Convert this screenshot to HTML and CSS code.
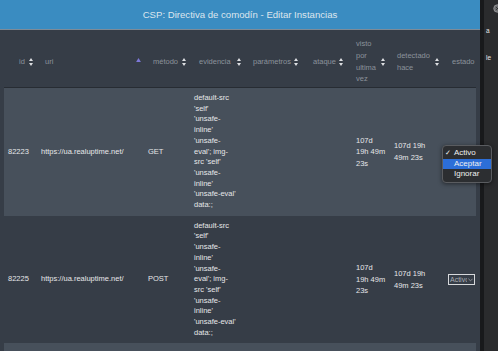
FILE: index.html
```
<!doctype html>
<html lang="es">
<head>
<meta charset="utf-8">
<title>CSP: Directiva de comodín - Editar Instancias</title>
<link rel="stylesheet" href="styles.css">
</head>
<body>
	<div class="page">
		<div class="modal">
			<div class="modal-head">CSP: Directiva de comodín - Editar Instancias</div>
			<div class="table-wrap">
				<table class="grid">
					<colgroup>
						<col class="w-id"><col class="w-uri"><col class="w-met"><col class="w-evi"><col class="w-par">
						<col class="w-ata"><col class="w-vis"><col class="w-det"><col class="w-est">
					</colgroup>
					<thead>
						<tr>
							<th class="h-id"><div class="th"><span>id</span><svg class="sort" viewBox="0 0 4 8"><path d="M2 0L4 3H0Z M2 8L0 5H4Z"/></svg></div></th>
							<th class="h-uri"><div class="th"><span>uri</span><svg class="sort-asc" viewBox="0 0 6 5"><path d="M3 0L6 5H0Z"/></svg></div></th>
							<th><div class="th"><span>método</span><svg class="sort" viewBox="0 0 4 8"><path d="M2 0L4 3H0Z M2 8L0 5H4Z"/></svg></div></th>
							<th class="h-evi"><div class="th"><span>evidencia</span><svg class="sort" viewBox="0 0 4 8"><path d="M2 0L4 3H0Z M2 8L0 5H4Z"/></svg></div></th>
							<th class="h-par"><div class="th"><span>parámetros</span><svg class="sort" viewBox="0 0 4 8"><path d="M2 0L4 3H0Z M2 8L0 5H4Z"/></svg></div></th>
							<th class="h-ata"><div class="th"><span>ataque</span><svg class="sort" viewBox="0 0 4 8"><path d="M2 0L4 3H0Z M2 8L0 5H4Z"/></svg></div></th>
							<th><div class="th"><span>visto por ultima vez</span><svg class="sort" viewBox="0 0 4 8"><path d="M2 0L4 3H0Z M2 8L0 5H4Z"/></svg></div></th>
							<th class="h-det"><div class="th"><span>detectado hace</span><svg class="sort" viewBox="0 0 4 8"><path d="M2 0L4 3H0Z M2 8L0 5H4Z"/></svg></div></th>
							<th><div class="th"><span>estado</span></div></th>
						</tr>
					</thead>
					<tbody>
						<tr class="odd">
							<td>82223</td>
							<td>https://ua.realuptime.net/</td>
							<td>GET</td>
							<td><div class="evi">default-src 'self' 'unsafe-inline' 'unsafe-eval'; img-src 'self' 'unsafe-inline' 'unsafe-eval' data:;</div></td>
							<td></td>
							<td></td>
							<td class="d-vis"><div class="vis">107d 19h 49m 23s</div></td>
							<td class="d-det">107d 19h 49m 23s</td>
							<td class="d-est"><div class="select open"><span>Activo</span><svg viewBox="0 0 6 4"><path d="M0.5 0.5L3 3L5.5 0.5"/></svg></div></td>
						</tr>
						<tr>
							<td>82225</td>
							<td>https://ua.realuptime.net/</td>
							<td>POST</td>
							<td><div class="evi">default-src 'self' 'unsafe-inline' 'unsafe-eval'; img-src 'self' 'unsafe-inline' 'unsafe-eval' data:;</div></td>
							<td></td>
							<td></td>
							<td class="d-vis"><div class="vis">107d 19h 49m 23s</div></td>
							<td class="d-det">107d 19h 49m 23s</td>
							<td class="d-est"><div class="select"><span>Activo</span><svg viewBox="0 0 6 4"><path d="M0.5 0.5L3 3L5.5 0.5"/></svg></div></td>
						</tr>
						<!-- next row, scrolled below the fold -->
						<tr class="odd next">
							<td></td><td></td><td></td><td></td><td></td><td></td><td></td><td></td><td></td>
						</tr>
					</tbody>
				</table>
			</div>
		</div>
		<div class="backdrop">
			<svg class="close" viewBox="0 0 10 10"><circle cx="5" cy="5" r="4.2"/><path d="M3.5 3.5L6.5 6.5M6.5 3.5L3.5 6.5"/></svg>
			<span class="peek peek-a">a</span>
			<span class="peek peek-b">le</span>
		</div>
	</div>

	<!-- open dropdown of the first row -->
	<ul class="menu">
		<li><span class="check">✓</span>Activo</li>
		<li class="hot">Aceptar</li>
		<li>Ignorar</li>
	</ul>
</body>
</html>
```

FILE: styles.css
```
	body, html {
		margin: 0;
	}

	body {
		background: #1e1f21;
		font-family: "Liberation Sans", Arial, sans-serif;
		overflow: hidden;
	}

	/* layout! */
	.page {
		display: flex;
		height: 351px;
	}
	.modal {
		flex: none;
		width: 480px;
		height: 351px;
		background: #363d47;
		overflow: hidden;
	}
	.modal-head {
		height: 29px;
		background: #3a8cc1;
		border-bottom: 1px solid #7e8b97;
		color: #dde6ee;
		font-size: 9.6px;
		display: flex;
		align-items: center;
		justify-content: center;
	}
	.table-wrap {
		margin-left: 4px;
		width: 472px;
		overflow: hidden;
	}

	/* table stuff! */
	table.grid {
		border-collapse: separate;
		border-spacing: 0;
		table-layout: fixed;
		width: 496px;
		font-size: 7.5px;
	}
	col.w-id { width: 33px; }
	col.w-uri { width: 107px; }
	col.w-met { width: 46px; }
	col.w-evi { width: 55px; }
	col.w-par { width: 57px; }
	col.w-ata { width: 45px; }
	col.w-vis { width: 42px; }
	col.w-det { width: 54px; }
	col.w-est { width: 57px; }

	th {
		height: 51px;
		padding: 6px 4px 0 9px;
		border-bottom: 1px solid #272c33;
		color: #8b929b;
		font-weight: normal;
		text-align: left;
		line-height: 11.6px;
		vertical-align: middle;
	}
	th.h-id { padding-left: 15px; }
	th.h-uri { padding-left: 8px; padding-right: 3px; }
	th.h-evi { padding-left: 9px; }
	th.h-par { padding-left: 8px; }
	th.h-ata { padding-left: 11px; }
	th.h-det { padding-left: 8px; }
	.th {
		display: flex;
		align-items: center;
	}
	.th span {
		flex: 1;
		min-width: 0;
		white-space: normal;
	}
	.sort {
		flex: none;
		width: 4px;
		height: 8px;
		margin-left: 2px;
		fill: #dcdee1;
	}
	.sort-asc {
		flex: none;
		width: 5px;
		height: 4px;
		margin-bottom: 3px;
		fill: #7d78d8;
	}

	td {
		padding: 5px 4px;
		color: #e6e7e9;
		line-height: 10.7px;
		vertical-align: middle;
	}
	tr.odd td {
		background: #47505b;
	}
	tr.next td {
		height: 30px;
	}
	.evi {
		width: 42.5px;
	}
	td.d-vis { padding-left: 9px; }
	.vis {
		width: 30.2px;
		line-height: 11.5px;
	}
	td.d-det {
		padding-left: 5px;
		line-height: 11.5px;
	}
	td.d-est { padding-left: 5px; }

	/* the little select */
	.select {
		display: flex;
		align-items: center;
		width: 24px;
		height: 9px;
		padding-left: 1px;
		border: 1px solid #d6d8db;
		background: #363d47;
		color: #a9adb3;
		font-size: 7px;
		line-height: 9px;
		overflow: hidden;
	}
	.select.open {
		visibility: hidden;
	}
	.select span {
		flex: none;
		width: 17px;
		overflow: hidden;
		white-space: nowrap;
	}
	.select svg {
		flex: none;
		width: 5px;
		height: 4px;
		margin-left: 1px;
		fill: none;
		stroke: #a9adb3;
		stroke-width: 0.9;
	}

	/* outside the modal */
	.backdrop {
		flex: 1;
		position: relative;
		background: #2a2b2d;
		border-left: 4px solid #18191b;
	}
	.close {
		position: absolute;
		left: 9px;
		top: 4px;
		width: 9px;
		height: 9px;
	}
	.close circle {
		fill: #6f7072;
		stroke: #a4a5a7;
		stroke-width: 0.8;
	}
	.close path {
		stroke: #2a2b2d;
		stroke-width: 1;
	}
	.peek {
		position: absolute;
		left: 2px;
		color: #e8e8e8;
		font-size: 6.5px;
	}
	.peek-a { top: 27px; }
	.peek-b { top: 54px; }

	/* open dropdown menu, sits over everything */
	.menu {
		position: absolute;
		left: 442px;
		top: 145px;
		width: 48px;
		margin: 0;
		padding: 2px 0;
		list-style: none;
		background: #2c2e31;
		border: 1px solid #5a5c60;
		border-radius: 4px;
		box-shadow: 0 1px 4px rgba(0, 0, 0, 0.5);
		color: #f0f0f0;
		font-size: 8px;
	}
	.menu li {
		height: 10.5px;
		line-height: 10.5px;
		padding-left: 11px;
		position: relative;
	}
	.menu li.hot {
		background: #2c6ed8;
	}
	.menu .check {
		position: absolute;
		left: 2px;
		font-size: 7px;
	}
```
